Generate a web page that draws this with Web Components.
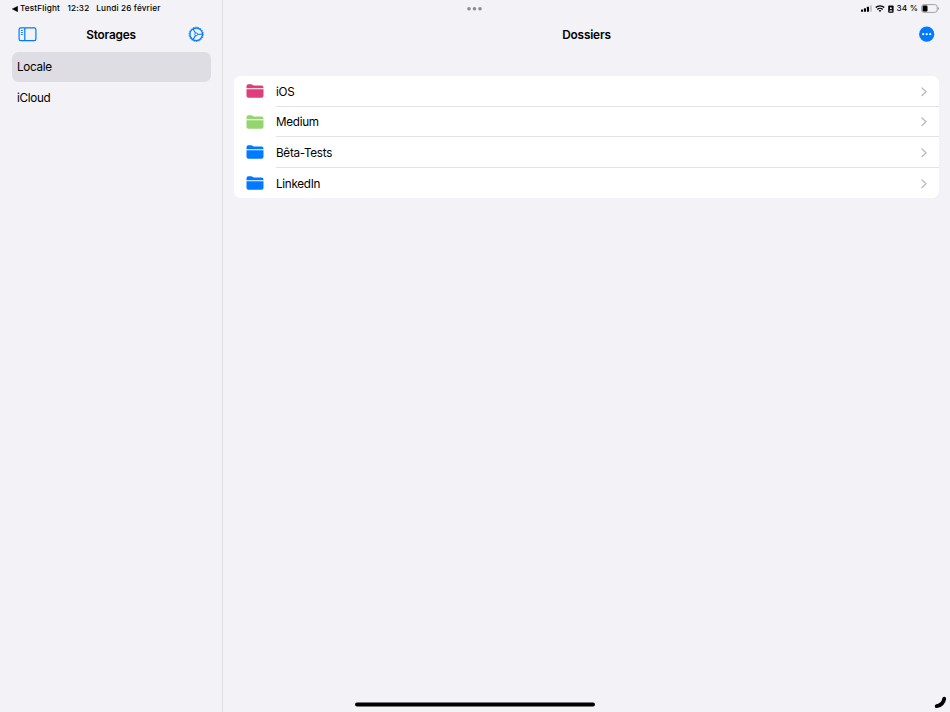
<!DOCTYPE html>
<html lang="fr">
<head>
<meta charset="utf-8">
<title>Dossiers</title>
<style>
  html, body {
    margin: 0;
    height: 100%;
    overflow: hidden;
  }
  body {
    font-family: Inter, "Liberation Sans", sans-serif;
    font-size: 11.7px;
    color: #000;
    background-color: #f2f2f7;
    --tint: #007aff;
  }
</style>
</head>
<body>
<folders-app></folders-app>

<script>
function makeTemplate(html) {
  const template = document.createElement("template");
  template.innerHTML = html;
  return template;
}

function attach(element, template) {
  element
    .attachShadow({ mode: "open" })
    .appendChild(template.content.cloneNode(true));
}

const statusTemplate = makeTemplate(`
  <style>
    :host {
      display: grid;
      grid-template-columns: 1fr auto 1fr;
      align-items: center;
      height: 17px;
      padding: 0 11px 0 10px;
      font-size: 8.2px;
      font-weight: 500;
      line-height: 17px;
    }
    .left, .right {
      display: flex;
      align-items: center;
      white-space: pre;
    }
    .left {
      padding-left: 1.5px;
      letter-spacing: 0.15px;
    }
    .back {
      margin-right: 2.5px;
    }
    .time {
      margin: 0 7px 0 7.5px;
    }
    .right {
      justify-content: flex-end;
    }
    .wifi {
      margin: 0 3px;
    }
    .percent {
      margin: 0 3px;
      letter-spacing: 0.15px;
    }
    svg {
      display: block;
      flex: none;
    }
  </style>
  <div class="left">
    <svg class="back" width="6" height="6" viewBox="0 0 6 6"><path d="M0.3 3 5.7 0.3V5.7Z" stroke="#000" stroke-width=".5" stroke-linejoin="round"/></svg>
    <span>TestFlight</span>
    <span class="time">12:32</span>
    <span>Lundi 26 février</span>
  </div>
  <svg width="15" height="5" viewBox="0 0 15 5" fill="#8b8b90"><circle cx="2" cy="2.7" r="1.8"/><circle cx="7.5" cy="2.7" r="1.8"/><circle cx="13" cy="2.7" r="1.8"/></svg>
  <div class="right">
    <svg width="11" height="7" viewBox="0 0 11 7">
      <rect x="0" y="4.4" width="2.1" height="2.4" rx=".5"/>
      <rect x="2.9" y="3.3" width="2.1" height="3.5" rx=".5"/>
      <rect x="5.9" y="1.8" width="2.1" height="5" rx=".5"/>
      <rect x="8.8" y=".3" width="2.1" height="6.5" rx=".5" fill="#c4c4c9"/>
    </svg>
    <svg class="wifi" width="10" height="7" viewBox="0 0 10 7" fill="none" stroke="#000" stroke-width="1.4">
      <path d="M.7 2.6a6.2 6.2 0 0 1 8.6 0M2.4 4.4a3.7 3.7 0 0 1 5.2 0"/>
      <path d="M5 7 3.6 5.6a2 2 0 0 1 2.8 0Z" fill="#000" stroke="none"/>
    </svg>
    <svg width="6" height="8" viewBox="0 0 6 8">
      <rect x=".2" y=".4" width="5.4" height="7.3" rx="1"/>
      <circle cx="2.9" cy="3.3" r="1" fill="#f2f2f7"/>
      <path d="M1.2 6.4c.2-1.700 3.200-1.700 3.400 0Z" fill="#f2f2f7"/>
    </svg>
    <span class="percent">34 %</span>
    <svg width="18" height="9" viewBox="0 0 18 9">
      <rect x=".6" y=".6" width="15.6" height="7.8" rx="2.4" fill="none" stroke="#98989d" stroke-width=".9"/>
      <path d="M17 3v3c1.200-.4 1.200-2.600 0-3Z" fill="#9c9ca1"/>
      <rect x="1.600" y="1.600" width="4.900" height="5.800" rx="1.200"/>
    </svg>
  </div>
`);

class StatusBar extends HTMLElement {
  constructor() {
    super();
    attach(this, statusTemplate);
  }
}

const navTemplate = makeTemplate(`
  <style>
    :host {
      display: grid;
      grid-template-columns: 1fr auto 1fr;
      align-items: center;
      height: 35px;
      box-sizing: border-box;
    }
    h1 {
      margin: 0;
      font-size: 11.8px;
      line-height: 16px;
      font-weight: 600;
      letter-spacing: -0.18px;
    }
    .end {
      justify-self: end;
    }
  </style>
  <div><slot name="start"></slot></div>
  <h1><slot></slot></h1>
  <div class="end"><slot name="end"></slot></div>
`);

class NavBar extends HTMLElement {
  constructor() {
    super();
    attach(this, navTemplate);
  }
}

const glyphs = {
  sidebar: `
    <svg width="19" height="17" viewBox="0 0 19 17" fill="none" stroke="currentColor">
      <rect x="1.1" y="1.9" width="16.8" height="12.8" rx="1.7" stroke-width="1.2"/>
      <path d="M6.8 2v12.7" stroke-width="1.2"/>
      <path d="M2.9 4.5h2M2.9 6.5h2M2.9 8.5h2" stroke-width=".9"/>
    </svg>`,
  gear: `
    <svg width="16" height="17" viewBox="0 0 16 17" fill="none" stroke="currentColor">
      <circle cx="8.2" cy="8.3" r="7.2" stroke-width=".9" stroke-dasharray="1.3 1.213"/>
      <circle cx="8.2" cy="8.3" r="6.3" stroke-width="1.3"/>
      <circle cx="8.2" cy="8.3" r="1.45" stroke-width=".9"/>
      <path d="M9.6 8.3h4.7M7.45 7 5.1 3M7.45 9.6l-2.35 4" stroke-width="1.1"/>
    </svg>`,
  more: `
    <svg width="16" height="17" viewBox="0 0 16 17">
      <circle cx="7.7" cy="8.2" r="7.6" fill="currentColor"/>
      <g fill="#fff"><circle cx="4.2" cy="8.2" r="1.1"/><circle cx="7.7" cy="8.2" r="1.1"/><circle cx="11.2" cy="8.2" r="1.1"/></g>
    </svg>`,
};

class GlyphIcon extends HTMLElement {
  connectedCallback() {
    if (this.shadowRoot) return;
    attach(
      this,
      makeTemplate(`
        <style>
          :host { display: block; color: var(--tint); }
          svg { display: block; }
        </style>
        ${glyphs[this.getAttribute("name")]}
      `)
    );
  }
}

const storageTemplate = makeTemplate(`
  <style>
    :host {
      display: flex;
      align-items: center;
      height: 30.4px;
      padding: 0.6px 5px 0;
      border-radius: 6.5px;
      box-sizing: border-box;
      letter-spacing: -0.3px;
    }
    :host([selected]) {
      background-color: #dedde3;
    }
  </style>
  <slot></slot>
`);

class StorageItem extends HTMLElement {
  constructor() {
    super();
    attach(this, storageTemplate);
  }
}

const folderTemplate = makeTemplate(`
  <style>
    :host {
      display: flex;
      align-items: center;
      height: 30.6px;
      padding-left: 12px;
      box-sizing: border-box;
    }
    svg {
      display: block;
      flex: none;
    }
    .content {
      flex: 1;
      display: flex;
      align-items: center;
      justify-content: space-between;
      align-self: stretch;
      margin-left: 12px;
      padding: 2px 12px 0 0;
      border-bottom: 1px solid #e3e3e6;
      letter-spacing: -0.29px;
    }
    :host(:last-of-type) .content {
      border-bottom-color: transparent;
    }
  </style>
  <svg class="folder" width="18" height="14" viewBox="0 0 18 14" fill="currentColor">
    <path d="M.5 4.200V2.200Q.5.300 2.400.300h2.700c1.300 0 1.500 1.200 2.900 1.200h7.600q1.900 0 1.900 1.900v.8Z"/>
    <path d="M.5 5.200h17v6.600q0 1.900-1.900 1.900H2.400q-1.900 0-1.900-1.900Z"/>
  </svg>
  <div class="content">
    <slot></slot>
    <svg width="7" height="10" viewBox="0 0 7 10" fill="none" stroke="#bcbcc0" stroke-width="1.4" stroke-linecap="round" stroke-linejoin="round"><path d="M2 1 6 4.800l-4 3.800"/></svg>
  </div>
`);

class FolderRow extends HTMLElement {
  constructor() {
    super();
    attach(this, folderTemplate);
  }

  connectedCallback() {
    this.shadowRoot.querySelector(".folder").style.color =
      this.getAttribute("color") || "var(--tint)";
  }
}

const listTemplate = makeTemplate(`
  <style>
    :host {
      display: block;
      background-color: #fff;
      border-radius: 6.5px;
      overflow: hidden;
    }
  </style>
  <slot></slot>
`);

class FolderList extends HTMLElement {
  constructor() {
    super();
    attach(this, listTemplate);
  }
}

const appTemplate = makeTemplate(`
  <style>
    :host {
      display: grid;
      grid-template-columns: 223px 1fr;
      height: 100vh;
      position: relative;
    }
    aside, main {
      padding-top: 17px;
      box-sizing: border-box;
    }
    aside {
      border-right: 1px solid #dfdfe4;
    }
    aside nav-bar {
      padding: 0 18px;
    }
    nav {
      padding: 0 11px 0 12px;
    }
    main nav-bar {
      padding: 0 15px;
    }
    folder-list {
      margin: 24px 11.5px 0 11px;
    }
    status-bar {
      position: absolute;
      inset: 0 0 auto 0;
    }
    .home {
      position: absolute;
      left: 355px;
      bottom: 5px;
    }
    .corner {
      position: absolute;
      right: 3px;
      bottom: 3px;
    }
  </style>
  <aside>
    <nav-bar>
      <glyph-icon slot="start" name="sidebar"></glyph-icon>
      Storages
      <glyph-icon slot="end" name="gear"></glyph-icon>
    </nav-bar>
    <nav>
      <storage-item selected>Locale</storage-item>
      <storage-item>iCloud</storage-item>
    </nav>
  </aside>
  <main>
    <nav-bar>
      Dossiers
      <glyph-icon slot="end" name="more"></glyph-icon>
    </nav-bar>
    <folder-list>
      <folder-row color="#de3f7b">iOS</folder-row>
      <folder-row color="#95d56f">Medium</folder-row>
      <folder-row>Bêta-Tests</folder-row>
      <folder-row>LinkedIn</folder-row>
    </folder-list>
  </main>
  <status-bar></status-bar>
  <svg class="home" width="240" height="5" viewBox="0 0 240 5"><rect y=".5" width="240" height="4" rx="2"/></svg>
  <svg class="corner" width="13" height="13" viewBox="0 0 13 13" fill="none" stroke="#000" stroke-width="3.9" stroke-linecap="round"><path d="M10.2 2.800Q9.200 9.100 2.700 10.100"/></svg>
`);

class FoldersApp extends HTMLElement {
  constructor() {
    super();
    attach(this, appTemplate);
  }
}

customElements.define("status-bar", StatusBar);
customElements.define("nav-bar", NavBar);
customElements.define("glyph-icon", GlyphIcon);
customElements.define("storage-item", StorageItem);
customElements.define("folder-row", FolderRow);
customElements.define("folder-list", FolderList);
customElements.define("folders-app", FoldersApp);
</script>
</body>
</html>
